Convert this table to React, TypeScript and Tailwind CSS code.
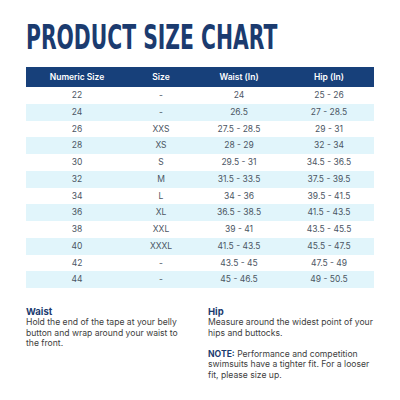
import React from "react";

const rows = [
  ["22", "-", "24", "25 - 26"],
  ["24", "-", "26.5", "27 - 28.5"],
  ["26", "XXS", "27.5 - 28.5", "29 - 31"],
  ["28", "XS", "28 - 29", "32 - 34"],
  ["30", "S", "29.5 - 31", "34.5 - 36.5"],
  ["32", "M", "31.5 - 33.5", "37.5 - 39.5"],
  ["34", "L", "34 - 36", "39.5 - 41.5"],
  ["36", "XL", "36.5 - 38.5", "41.5 - 43.5"],
  ["38", "XXL", "39 - 41", "43.5 - 45.5"],
  ["40", "XXXL", "41.5 - 43.5", "45.5 - 47.5"],
  ["42", "-", "43.5 - 45", "47.5 - 49"],
  ["44", "-", "45 - 46.5", "49 - 50.5"],
];

const cols = ["w-[102px]", "w-[66px]", "w-[90px]", "w-[90px]"];

export default function App() {
  return (
    <div className="w-[400px] h-[400px] bg-white overflow-hidden font-['Inter',sans-serif]">
      <div className="pt-[17px] pl-[26px] h-[67px]">
        <h1 className="origin-left scale-x-[0.665] whitespace-nowrap font-['DejaVu_Sans_Condensed','DejaVu_Sans',sans-serif] font-bold text-[34px] leading-[40px] text-[#1b3b6f]">
          PRODUCT SIZE CHART
        </h1>
      </div>

      <div className="mx-[26px] w-[348px]">
        <div className="flex h-[20px] items-center bg-[#17407a] text-white text-[8.5px] font-semibold">
          {["Numeric Size", "Size", "Waist (In)", "Hip (In)"].map((h, i) => (
            <div key={h} className={`${cols[i]} text-center`}>
              {h}
            </div>
          ))}
        </div>
        {rows.map((r, ri) => (
          <div
            key={ri}
            className={`flex h-[16.75px] items-center text-[8.5px] text-[#4b5563] ${
              ri % 2 === 1 ? "bg-[#e1f5fb]" : "bg-white"
            }`}
          >
            {r.map((c, ci) => (
              <div key={ci} className={`${cols[ci]} text-center`}>
                {c}
              </div>
            ))}
          </div>
        ))}
      </div>

      <div className="flex mt-[18px] pl-[26px] text-[8.6px] leading-[10.6px] text-[#404040]">
        <div className="w-[182px] pr-[20px]">
          <div className="font-bold text-[9.5px] text-[#1b3b6f] leading-[11px]">Waist</div>
          <p>
            Hold the end of the tape at your belly button and wrap around your waist to
            the front.
          </p>
        </div>
        <div className="w-[168px]">
          <div className="font-bold text-[9.5px] text-[#1b3b6f] leading-[11px]">Hip</div>
          <p>Measure around the widest point of your hips and buttocks.</p>
          <p className="mt-[10.6px]">
            <span className="font-bold text-[#1b3b6f]">NOTE:</span> Performance and
            competition swimsuits have a tighter fit. For a looser fit, please size up.
          </p>
        </div>
      </div>
    </div>
  );
}
